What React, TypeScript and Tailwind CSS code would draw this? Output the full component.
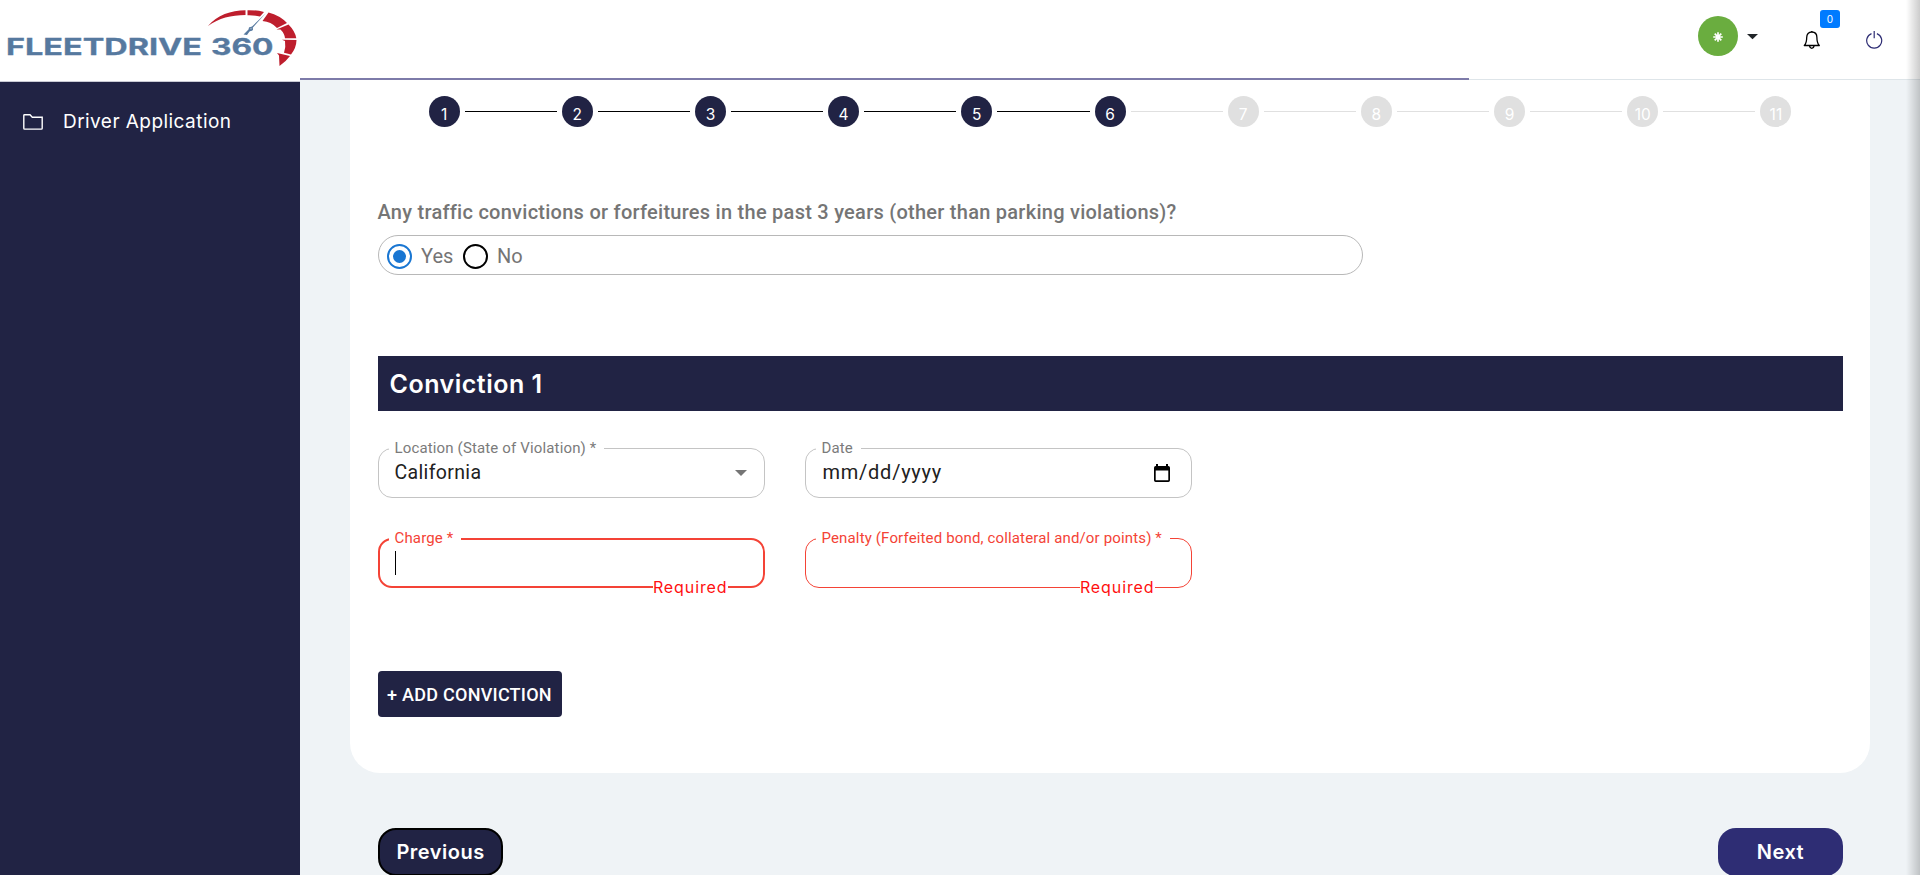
import React from "react";

const steps = [1, 2, 3, 4, 5, 6, 7, 8, 9, 10, 11];
const current = 6;

function Logo() {
  return (
    <svg width="300" height="80" viewBox="0 0 300 80" className="block">
      <g fill="#56799f" stroke="#56799f" strokeWidth="0.3" fontFamily="Inter, sans-serif" fontWeight="700" fontSize="22.4">
        <text x="6" y="54.5" textLength="196" lengthAdjust="spacingAndGlyphs">FLEETDRIVE</text>
        <text x="211" y="54.5" textLength="62.5" lengthAdjust="spacingAndGlyphs">360</text>
      </g>
      <g fill="#be1e2d">
        <path d="M208 26 C217 15 231 10.5 245.5 10.3 L245.5 15 C231 15.2 219 18 208 26Z" />
        <path d="M247.5 10.2 Q256 10 264 12 L260 16.5 Q255 15 247.5 15.2 L247.5 18Z" />
        <path d="M268.5 12.5 Q280 15.5 287 23 L277 28 Q271 21.5 262.5 21Z" />
        <path d="M288.5 24.5 Q295 31 296.3 38.2 L285 38.2 Q284.5 33.5 280.5 29.5 L276.5 29.5Z" />
        <path d="M296.5 40 Q296.3 48 291 54.5 L284 52.7 Q286 47 285 41 L282 39.8Z" />
        <path d="M290 56 Q286 61.5 279.5 66 L279 55.5 L277 53Z" />
      </g>
      <path d="M265.5 13.5 L252.5 28 L253 30 L249.5 31.5 L247 35 L243.5 34.5 L248.5 29.5 L249 27.5 L252 26.5Z" fill="#56799f" />
      <circle cx="251" cy="28.8" r="1.2" fill="#fff" stroke="#56799f" strokeWidth="1.3" />
    </svg>
  );
}

function Header() {
  return (
    <header className="flex h-20 flex-1 flex-col bg-white">
      <div className="flex h-[78px] items-start pl-[1398px]">
        <div className="mt-4 flex h-10 w-10 shrink-0 items-center justify-center rounded-full bg-[#6aad3f]">
          <svg width="10" height="10" viewBox="-5 -5 10 10" className="mt-0.5" stroke="#fff" strokeWidth="1.7">
            <path d="M0-4.8V4.8M-4.8 0H4.8M-3.3-3.3L3.3 3.3M-3.3 3.3L3.3-3.3" />
          </svg>
        </div>
        <svg width="11" height="6" viewBox="0 0 11 6" className="mt-[34px] ml-[9px] shrink-0">
          <path d="M0 0H11L5.5 5.3Z" fill="#212529" />
        </svg>
        <svg width="18" height="20" viewBox="0 0 18 20" className="mt-[30px] ml-[45px] shrink-0" fill="none" stroke="#000" strokeWidth="1.3">
          <path d="M1.3 15.5C3.2 13.5 3.7 11.5 3.7 7.5C3.7 4.3 5.6 2 8.8 2S13.9 4.3 13.9 7.5C13.9 11.5 14.4 13.5 16.3 15.5Z" strokeLinejoin="round" />
          <path d="M6.5 16Q7 18.3 8.8 18.3T11.1 16M8.8 1V2" />
        </svg>
        <div className="mt-2.5 -ml-px flex h-[18px] w-5 shrink-0 items-center justify-center rounded-[3px] bg-[#007bff] font-['Inter',sans-serif] text-[10px] text-white">0</div>
        <svg width="18" height="20" viewBox="0 0 18 20" className="mt-[30px] ml-[25px] shrink-0" fill="none" stroke="#2e2d74" strokeWidth="1.2">
          <path d="M6.5 3.6A7.5 7.5 0 1 0 11.9 3.6M9.2 1V8.2" />
        </svg>
      </div>
      <div className="flex h-0.5 items-end">
        <div className="h-0.5 w-[1169px] bg-[#7d7ba9]" />
        <div className="h-px flex-1 bg-[#dee5e9]" />
      </div>
    </header>
  );
}

function Stepper() {
  return (
    <ol className="grid h-8 grid-cols-11 font-['Inter',sans-serif]">
      {steps.map((n) => (
        <li key={n} className="flex items-center">
          <span className={"h-px flex-1 " + (n === 1 ? "bg-transparent" : n <= current ? "bg-black" : "bg-[#e0e0e0]")} />
          <span className={"mx-[5px] flex h-[31px] w-[31px] items-center justify-center rounded-full pt-[7px] text-[15.5px] leading-5 text-white " + (n <= current ? "bg-[#212344]" : "bg-[#e0e0e0]")}>
            {n}
          </span>
          <span className={"h-px flex-1 " + (n === 11 ? "bg-transparent" : n < current ? "bg-black" : "bg-[#e0e0e0]")} />
        </li>
      ))}
    </ol>
  );
}

function Radio({ on }: { on?: boolean }) {
  return (
    <span className={"flex h-[25px] w-[25px] items-center justify-center rounded-full border-[2.5px] " + (on ? "border-[#1976d2]" : "border-black")}>
      {on && <span className="h-[13px] w-[13px] rounded-full bg-[#1976d2]" />}
    </span>
  );
}

type FieldProps = { label: string; labelClass: string; border: string; error?: boolean; children?: React.ReactNode };

function Field({ label, labelClass, border, error, children }: FieldProps) {
  return (
    <div className="relative flex h-[50px] w-[387px] items-center">
      <span className={"absolute inset-0 rounded-[14px] " + border} />
      <span className={"absolute top-0 left-[11px] -translate-y-1/2 bg-white pr-2 pl-[6px] text-[15px] leading-[18px] tracking-[0.15px] whitespace-nowrap " + labelClass}>{label}</span>
      {children}
      {error && (
        <span className="absolute right-[37px] -bottom-[9px] bg-white font-['Inter',sans-serif] text-[16px] leading-5 tracking-[0.9px] text-[#ff1010]">Required</span>
      )}
    </div>
  );
}

export default function App() {
  return (
    <div className="relative flex h-[875px] w-[1920px] overflow-hidden bg-[#eff3f6] font-['Roboto',sans-serif]">
      <aside className="flex w-[300px] shrink-0 flex-col bg-[#212344]">
        <div className="h-[82px] border-b border-[#c9cad4] bg-white">
          <Logo />
        </div>
        <a className="mt-6 flex h-8 items-center pl-[23px] text-white">
          <svg width="20" height="16" viewBox="0 0 20 16" fill="none" stroke="#fff" strokeWidth="1.4">
            <path d="M.8 14.2V1.5Q.8.8 1.5.8H7L9.3 3.2H19.2V14.2Q19.2 15.1 18.3 15.1H1.6Q.8 15.1.8 14.2Z" />
          </svg>
          <span className="ml-5 font-['Inter',sans-serif] text-[19px] tracking-[0.45px]">Driver Application</span>
        </a>
      </aside>

      <div className="flex w-[1620px] flex-col">
        <div className="flex h-20 shrink-0">
          <Header />
        </div>
        <main className="ml-[50px] w-[1520px]">
          <section className="flex h-[693px] flex-col rounded-b-[30px] bg-white px-[27.5px] pt-[15.5px]">
            <Stepper />
            <h2 className="mt-[71px] h-[27px] text-[20px] leading-[27px] font-medium tracking-[0.26px] text-[#757575]">
              Any traffic convictions or forfeitures in the past 3 years (other than parking violations)?
            </h2>
            <div className="mt-[9.5px] flex h-10 w-[985px] items-center rounded-[20px] border border-[#b8b8b8] pt-0.5 pl-[8.5px] text-[20px] text-[#757575]">
              <Radio on />
              <span className="ml-[9px] w-[42px]">Yes</span>
              <Radio />
              <span className="ml-[9px]">No</span>
            </div>
            <h3 className="mt-[81px] flex h-[55px] items-center bg-[#212344] pt-0.5 pl-3 font-['Inter',sans-serif] text-[25px] font-semibold tracking-[0.5px] text-white">Conviction 1</h3>
            <div className="mt-[37px] grid grid-cols-[387px_387px] gap-x-10 gap-y-10">
              <Field label="Location (State of Violation) *" labelClass="text-[#7b7b7b]" border="border border-[#c4c4c4]">
                <span className="pl-[17px] text-[19.5px] tracking-[0.35px] text-[#212121]">California</span>
                <svg width="12" height="6" viewBox="0 0 12 6" className="ml-auto mr-[18px]"><path d="M0 0H12L6 6Z" fill="#757575" /></svg>
              </Field>
              <Field label="Date" labelClass="text-[#7b7b7b]" border="border border-[#c4c4c4]">
                <span className="pb-0.5 pl-[18px] text-[20px] tracking-[0.75px] text-[#212121]">mm/dd/yyyy</span>
                <svg width="16" height="18" viewBox="0 0 16 18" className="ml-auto mr-[22px]">
                  <path fillRule="evenodd" d="M2 0H4V2H12V0H14V2H14.3Q16 2 16 3.7V16.3Q16 18 14.3 18H1.7Q0 18 0 16.3V3.7Q0 2 1.7 2H2ZM1.7 6.5V16.3H14.3V6.5Z" />
                </svg>
              </Field>
              <Field label="Charge *" labelClass="text-[#f44336]" border="border-2 border-[#f44336]" error>
                <span className="ml-[17px] h-6 w-px bg-black" />
              </Field>
              <Field label="Penalty (Forfeited bond, collateral and/or points) *" labelClass="text-[#f44336]" border="border border-[#f44336]" error />
            </div>
            <button className="mt-[83px] h-[46px] w-[184px] shrink-0 rounded bg-[#212344] text-[18px] font-medium tracking-[0.25px] whitespace-nowrap text-white">+ ADD CONVICTION</button>
          </section>
          <div className="mt-[55px] flex justify-between pr-[27px] pl-7 font-['Inter',sans-serif] text-[20px] font-semibold tracking-[0.5px] text-white">
            <button className="h-12 w-[125px] rounded-[18px] border-2 border-black bg-[#212344]">Previous</button>
            <button className="h-12 w-[125px] rounded-[18px] bg-[#2e2d74]">Next</button>
          </div>
        </main>
      </div>
      <div className="absolute inset-y-0 right-0 w-3.5 bg-linear-to-r from-transparent to-black/20" />
    </div>
  );
}
